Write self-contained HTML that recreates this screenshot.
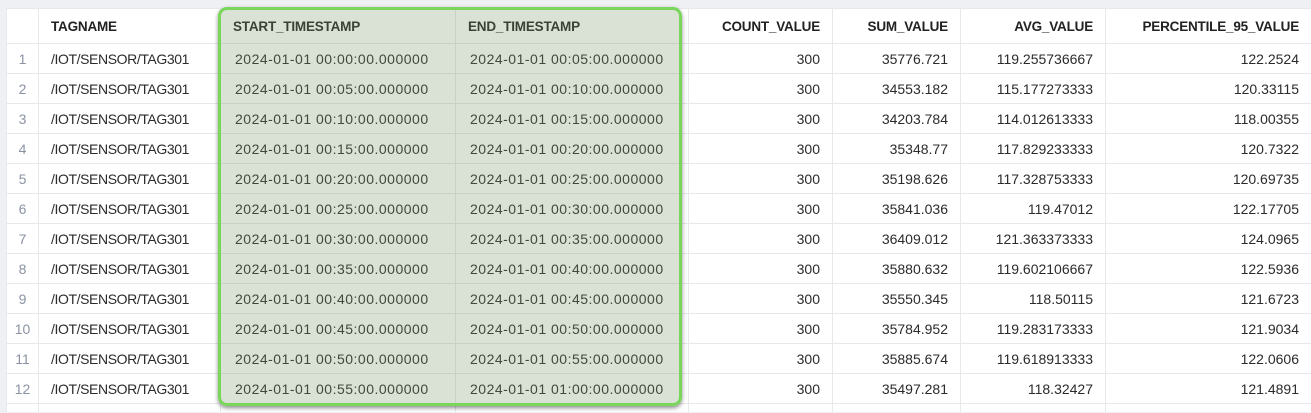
<!DOCTYPE html>
<html><head><meta charset="utf-8"><style>
html,body{margin:0;width:1311px;height:413px;overflow:hidden}
body{background:#eef0f4;font-family:"Liberation Sans",sans-serif;position:relative}
table{position:absolute;left:6px;top:8px;border-collapse:collapse;table-layout:fixed;background:#fff;width:1305px}
td,th{border:1px solid #e6e8ec;height:29px;padding:0 12px;font-size:14px;color:#2b2b2b;white-space:nowrap;overflow:hidden}
th{height:34px;font-size:13.5px;font-weight:bold;color:#222;text-align:left;letter-spacing:-0.2px}
th.r,td.r{text-align:right}
td.i{color:#8a93a3;text-align:center;padding:0}
td.n{letter-spacing:-0.4px}
td.t{letter-spacing:0.5px;padding-left:14px}
tr.last td{height:8px;border-bottom:none}
#hl{position:absolute;left:218px;top:7px;width:458px;height:393px;border:3px solid #7ad65a;border-radius:9px;background:rgba(120,150,105,0.28);box-shadow:0 2px 4px rgba(0,0,0,.45)}
</style></head><body>
<table>
<colgroup><col style="width:32px"><col style="width:182px"><col style="width:235px"><col style="width:233px"><col style="width:144px"><col style="width:128px"><col style="width:145px"><col style="width:206px"></colgroup>
<tr><th></th><th>TAGNAME</th><th>START_TIMESTAMP</th><th>END_TIMESTAMP</th><th class="r">COUNT_VALUE</th><th class="r">SUM_VALUE</th><th class="r">AVG_VALUE</th><th class="r">PERCENTILE_95_VALUE</th></tr>
<tr><td class="i">1</td><td class="n">/IOT/SENSOR/TAG301</td><td class="t">2024-01-01 00:00:00.000000</td><td class="t">2024-01-01 00:05:00.000000</td><td class="r">300</td><td class="r">35776.721</td><td class="r">119.255736667</td><td class="r">122.2524</td></tr>
<tr><td class="i">2</td><td class="n">/IOT/SENSOR/TAG301</td><td class="t">2024-01-01 00:05:00.000000</td><td class="t">2024-01-01 00:10:00.000000</td><td class="r">300</td><td class="r">34553.182</td><td class="r">115.177273333</td><td class="r">120.33115</td></tr>
<tr><td class="i">3</td><td class="n">/IOT/SENSOR/TAG301</td><td class="t">2024-01-01 00:10:00.000000</td><td class="t">2024-01-01 00:15:00.000000</td><td class="r">300</td><td class="r">34203.784</td><td class="r">114.012613333</td><td class="r">118.00355</td></tr>
<tr><td class="i">4</td><td class="n">/IOT/SENSOR/TAG301</td><td class="t">2024-01-01 00:15:00.000000</td><td class="t">2024-01-01 00:20:00.000000</td><td class="r">300</td><td class="r">35348.77</td><td class="r">117.829233333</td><td class="r">120.7322</td></tr>
<tr><td class="i">5</td><td class="n">/IOT/SENSOR/TAG301</td><td class="t">2024-01-01 00:20:00.000000</td><td class="t">2024-01-01 00:25:00.000000</td><td class="r">300</td><td class="r">35198.626</td><td class="r">117.328753333</td><td class="r">120.69735</td></tr>
<tr><td class="i">6</td><td class="n">/IOT/SENSOR/TAG301</td><td class="t">2024-01-01 00:25:00.000000</td><td class="t">2024-01-01 00:30:00.000000</td><td class="r">300</td><td class="r">35841.036</td><td class="r">119.47012</td><td class="r">122.17705</td></tr>
<tr><td class="i">7</td><td class="n">/IOT/SENSOR/TAG301</td><td class="t">2024-01-01 00:30:00.000000</td><td class="t">2024-01-01 00:35:00.000000</td><td class="r">300</td><td class="r">36409.012</td><td class="r">121.363373333</td><td class="r">124.0965</td></tr>
<tr><td class="i">8</td><td class="n">/IOT/SENSOR/TAG301</td><td class="t">2024-01-01 00:35:00.000000</td><td class="t">2024-01-01 00:40:00.000000</td><td class="r">300</td><td class="r">35880.632</td><td class="r">119.602106667</td><td class="r">122.5936</td></tr>
<tr><td class="i">9</td><td class="n">/IOT/SENSOR/TAG301</td><td class="t">2024-01-01 00:40:00.000000</td><td class="t">2024-01-01 00:45:00.000000</td><td class="r">300</td><td class="r">35550.345</td><td class="r">118.50115</td><td class="r">121.6723</td></tr>
<tr><td class="i">10</td><td class="n">/IOT/SENSOR/TAG301</td><td class="t">2024-01-01 00:45:00.000000</td><td class="t">2024-01-01 00:50:00.000000</td><td class="r">300</td><td class="r">35784.952</td><td class="r">119.283173333</td><td class="r">121.9034</td></tr>
<tr><td class="i">11</td><td class="n">/IOT/SENSOR/TAG301</td><td class="t">2024-01-01 00:50:00.000000</td><td class="t">2024-01-01 00:55:00.000000</td><td class="r">300</td><td class="r">35885.674</td><td class="r">119.618913333</td><td class="r">122.0606</td></tr>
<tr><td class="i">12</td><td class="n">/IOT/SENSOR/TAG301</td><td class="t">2024-01-01 00:55:00.000000</td><td class="t">2024-01-01 01:00:00.000000</td><td class="r">300</td><td class="r">35497.281</td><td class="r">118.32427</td><td class="r">121.4891</td></tr>
<tr class="last"><td></td><td></td><td></td><td></td><td></td><td></td><td></td><td></td></tr>
</table>
<div id="hl"></div>
</body></html>
